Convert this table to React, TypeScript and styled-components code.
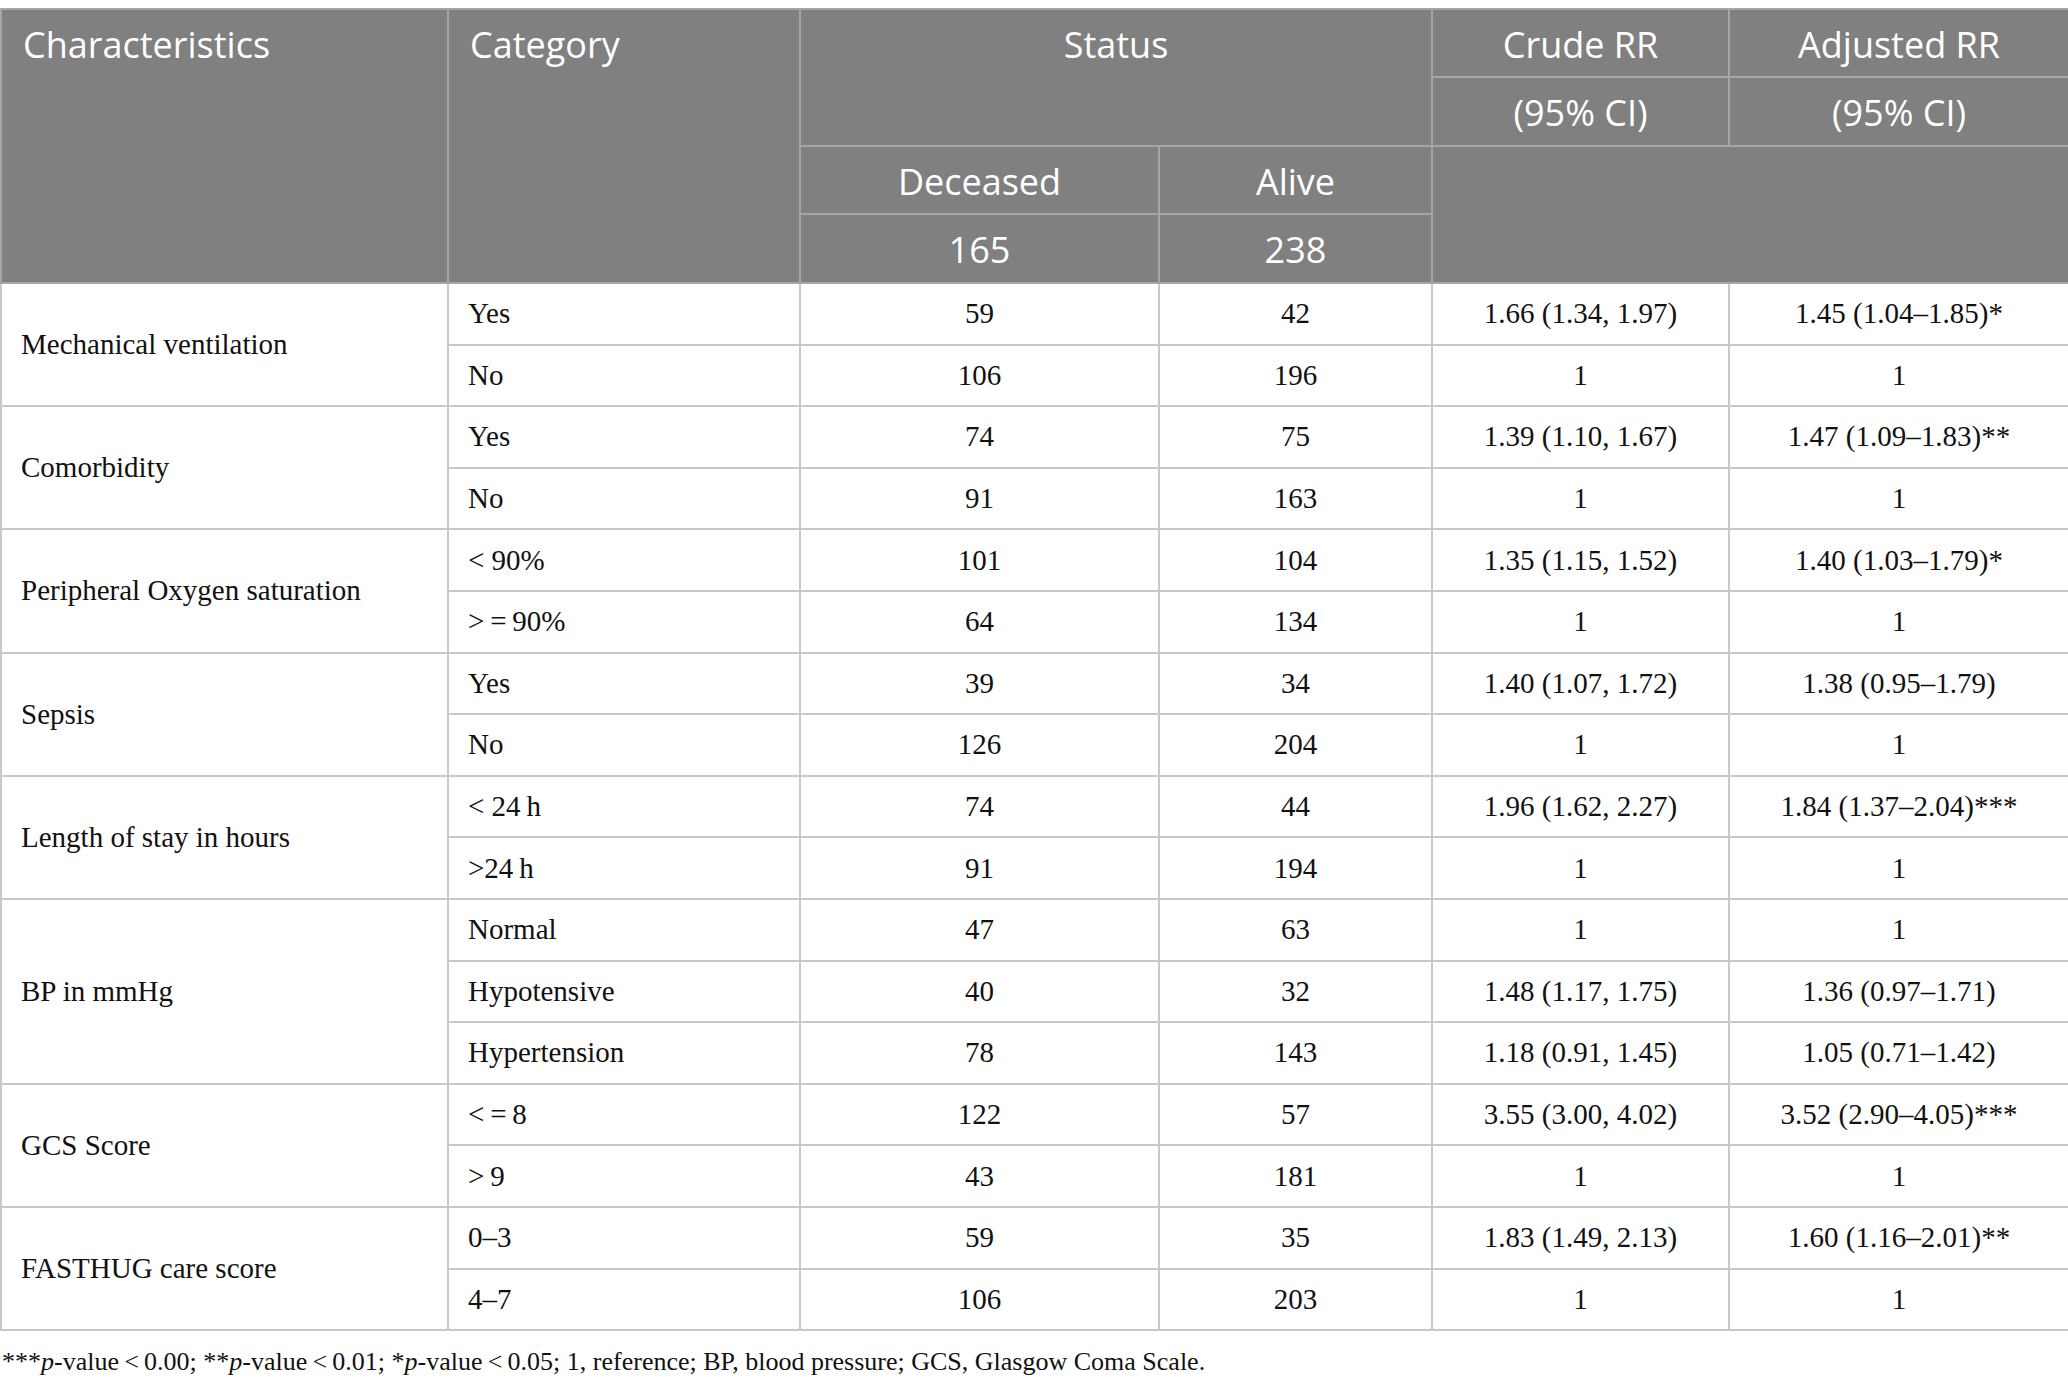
import React from "react";
import styled, { createGlobalStyle } from "styled-components";

const GlobalStyle = createGlobalStyle`
  html, body {
    margin: 0;
    padding: 0;
    background: #ffffff;
  }
`;

type Row = {
  category: string;
  deceased: string;
  alive: string;
  crude: string;
  adjusted: string;
};

type Group = {
  name: string;
  rows: Row[];
};

const groups: Group[] = [
  {
    name: "Mechanical ventilation",
    rows: [
      { category: "Yes", deceased: "59", alive: "42", crude: "1.66 (1.34, 1.97)", adjusted: "1.45 (1.04–1.85)*" },
      { category: "No", deceased: "106", alive: "196", crude: "1", adjusted: "1" },
    ],
  },
  {
    name: "Comorbidity",
    rows: [
      { category: "Yes", deceased: "74", alive: "75", crude: "1.39 (1.10, 1.67)", adjusted: "1.47 (1.09–1.83)**" },
      { category: "No", deceased: "91", alive: "163", crude: "1", adjusted: "1" },
    ],
  },
  {
    name: "Peripheral Oxygen saturation",
    rows: [
      { category: "< 90%", deceased: "101", alive: "104", crude: "1.35 (1.15, 1.52)", adjusted: "1.40 (1.03–1.79)*" },
      { category: ">\u2009=\u200990%", deceased: "64", alive: "134", crude: "1", adjusted: "1" },
    ],
  },
  {
    name: "Sepsis",
    rows: [
      { category: "Yes", deceased: "39", alive: "34", crude: "1.40 (1.07, 1.72)", adjusted: "1.38 (0.95–1.79)" },
      { category: "No", deceased: "126", alive: "204", crude: "1", adjusted: "1" },
    ],
  },
  {
    name: "Length of stay in hours",
    rows: [
      { category: "< 24\u2009h", deceased: "74", alive: "44", crude: "1.96 (1.62, 2.27)", adjusted: "1.84 (1.37–2.04)***" },
      { category: ">24\u2009h", deceased: "91", alive: "194", crude: "1", adjusted: "1" },
    ],
  },
  {
    name: "BP in mmHg",
    rows: [
      { category: "Normal", deceased: "47", alive: "63", crude: "1", adjusted: "1" },
      { category: "Hypotensive", deceased: "40", alive: "32", crude: "1.48 (1.17, 1.75)", adjusted: "1.36 (0.97–1.71)" },
      { category: "Hypertension", deceased: "78", alive: "143", crude: "1.18 (0.91, 1.45)", adjusted: "1.05 (0.71–1.42)" },
    ],
  },
  {
    name: "GCS Score",
    rows: [
      { category: "<\u2009=\u20098", deceased: "122", alive: "57", crude: "3.55 (3.00, 4.02)", adjusted: "3.52 (2.90–4.05)***" },
      { category: ">\u20099", deceased: "43", alive: "181", crude: "1", adjusted: "1" },
    ],
  },
  {
    name: "FASTHUG care score",
    rows: [
      { category: "0–3", deceased: "59", alive: "35", crude: "1.83 (1.49, 2.13)", adjusted: "1.60 (1.16–2.01)**" },
      { category: "4–7", deceased: "106", alive: "203", crude: "1", adjusted: "1" },
    ],
  },
];

export default function App() {
  return (
    <>
      <GlobalStyle />
      <Page>
        <Table>
          <colgroup>
            <col style={{ width: 447 }} />
            <col style={{ width: 352 }} />
            <col style={{ width: 359 }} />
            <col style={{ width: 273 }} />
            <col style={{ width: 297 }} />
            <col style={{ width: 340 }} />
          </colgroup>
          <thead>
            <HeadRow $h={68}>
              <HeadCell rowSpan={4} $align="left">Characteristics</HeadCell>
              <HeadCell rowSpan={4} $align="left">Category</HeadCell>
              <HeadCell colSpan={2} rowSpan={2}>Status</HeadCell>
              <HeadCell>Crude RR</HeadCell>
              <HeadCell>Adjusted RR</HeadCell>
            </HeadRow>
            <HeadRow $h={69}>
              <HeadCell>(95% CI)</HeadCell>
              <HeadCell>(95% CI)</HeadCell>
            </HeadRow>
            <HeadRow $h={68}>
              <HeadCell>Deceased</HeadCell>
              <HeadCell>Alive</HeadCell>
              <HeadCell colSpan={2} rowSpan={2} />
            </HeadRow>
            <HeadRow $h={69}>
              <HeadCell>165</HeadCell>
              <HeadCell>238</HeadCell>
            </HeadRow>
          </thead>
          <tbody>
            {groups.map((g) =>
              g.rows.map((r, i) => (
                <BodyRow key={g.name + i}>
                  {i === 0 && <NameCell rowSpan={g.rows.length}>{g.name}</NameCell>}
                  <CategoryCell>{r.category}</CategoryCell>
                  <ValueCell>{r.deceased}</ValueCell>
                  <ValueCell>{r.alive}</ValueCell>
                  <ValueCell>{r.crude}</ValueCell>
                  <ValueCell>{r.adjusted}</ValueCell>
                </BodyRow>
              ))
            )}
          </tbody>
        </Table>
        <Footnote>
          ***<i>p</i>-value{"\u2009<\u2009"}0.00; **<i>p</i>-value{"\u2009<\u2009"}0.01; *<i>p</i>-value{"\u2009<\u2009"}0.05; 1, reference; BP, blood pressure; GCS, Glasgow Coma Scale.
        </Footnote>
      </Page>
    </>
  );
}

const Page = styled.div`
  width: 2068px;
  padding-top: 8px;
`;

const Table = styled.table`
  width: 2068px;
  table-layout: fixed;
  border-collapse: collapse;
  border: 2px solid #c4c4c4;
`;

const HeadRow = styled.tr<{ $h: number }>`
  height: ${(p) => p.$h}px;
`;

const HeadCell = styled.th<{ $align?: "left" | "center" }>`
  background: #7f807f;
  color: #ffffff;
  font-family: "Open Sans", "Noto Sans", sans-serif;
  font-weight: 400;
  font-size: 36px;
  line-height: 58px;
  text-align: ${(p) => p.$align ?? "center"};
  vertical-align: top;
  padding: 6px 21px 0;
  border: 2px solid #a6a6a6;
  white-space: nowrap;
`;

const BodyRow = styled.tr`
  height: 61.6px;
`;

const BodyCell = styled.td`
  font-family: "Liberation Serif", "Times New Roman", serif;
  font-size: 29px;
  color: #111111;
  border: 2px solid #c8c8c8;
  vertical-align: middle;
  padding: 0 19px;
  white-space: nowrap;
`;

const NameCell = styled(BodyCell)`
  text-align: left;
`;

const CategoryCell = styled(BodyCell)`
  text-align: left;
`;

const ValueCell = styled(BodyCell)`
  text-align: center;
`;

const Footnote = styled.div`
  font-family: "Liberation Serif", "Times New Roman", serif;
  font-size: 26px;
  color: #111111;
  padding: 16px 0 0 2px;
`;
